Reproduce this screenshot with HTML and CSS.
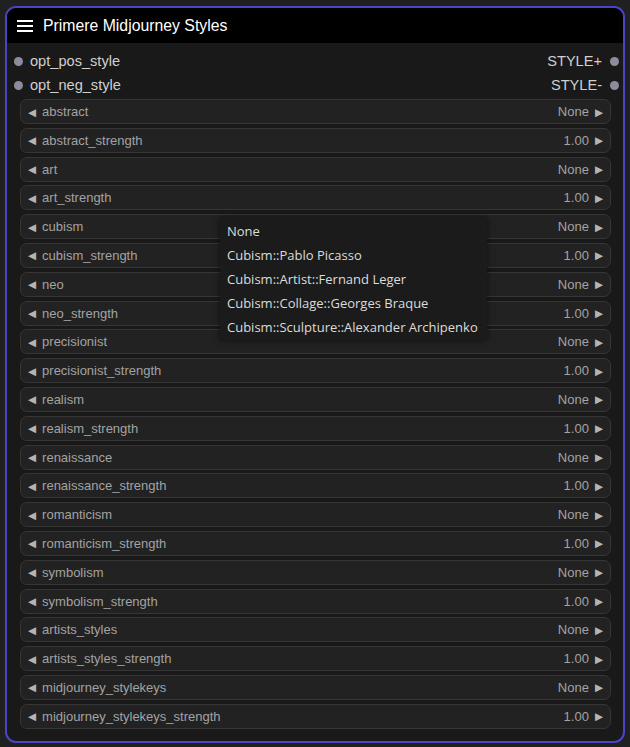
FILE: index.html
```html
<!DOCTYPE html>
<html>
<head>
<meta charset="utf-8">
<link rel="stylesheet" href="styles.css">
</head>
<body>
<div class="node">
  <div class="title">
    <svg class="ham" width="16" height="14" viewBox="0 0 16 14"><rect x="0" y="1" width="16" height="2" fill="#fff"/><rect x="0" y="6" width="16" height="2" fill="#fff"/><rect x="0" y="11" width="16" height="2" fill="#fff"/></svg>
    <span>Primere Midjourney Styles</span>
  </div>
  <div class="slots">
    <div class="slot"><span class="dot"></span><span class="in">opt_pos_style</span><span class="out">STYLE+</span><span class="dot"></span></div>
    <div class="slot"><span class="dot"></span><span class="in">opt_neg_style</span><span class="out">STYLE-</span><span class="dot"></span></div>
  </div>
  <div class="widgets">
    <div class="w"><span class="al">◀</span><span class="name">abstract</span><span class="val">None</span><span class="ar">▶</span></div>
    <div class="w"><span class="al">◀</span><span class="name">abstract_strength</span><span class="val">1.00</span><span class="ar">▶</span></div>
    <div class="w"><span class="al">◀</span><span class="name">art</span><span class="val">None</span><span class="ar">▶</span></div>
    <div class="w"><span class="al">◀</span><span class="name">art_strength</span><span class="val">1.00</span><span class="ar">▶</span></div>
    <div class="w"><span class="al">◀</span><span class="name">cubism</span><span class="val">None</span><span class="ar">▶</span></div>
    <div class="w"><span class="al">◀</span><span class="name">cubism_strength</span><span class="val">1.00</span><span class="ar">▶</span></div>
    <div class="w"><span class="al">◀</span><span class="name">neo</span><span class="val">None</span><span class="ar">▶</span></div>
    <div class="w"><span class="al">◀</span><span class="name">neo_strength</span><span class="val">1.00</span><span class="ar">▶</span></div>
    <div class="w"><span class="al">◀</span><span class="name">precisionist</span><span class="val">None</span><span class="ar">▶</span></div>
    <div class="w"><span class="al">◀</span><span class="name">precisionist_strength</span><span class="val">1.00</span><span class="ar">▶</span></div>
    <div class="w"><span class="al">◀</span><span class="name">realism</span><span class="val">None</span><span class="ar">▶</span></div>
    <div class="w"><span class="al">◀</span><span class="name">realism_strength</span><span class="val">1.00</span><span class="ar">▶</span></div>
    <div class="w"><span class="al">◀</span><span class="name">renaissance</span><span class="val">None</span><span class="ar">▶</span></div>
    <div class="w"><span class="al">◀</span><span class="name">renaissance_strength</span><span class="val">1.00</span><span class="ar">▶</span></div>
    <div class="w"><span class="al">◀</span><span class="name">romanticism</span><span class="val">None</span><span class="ar">▶</span></div>
    <div class="w"><span class="al">◀</span><span class="name">romanticism_strength</span><span class="val">1.00</span><span class="ar">▶</span></div>
    <div class="w"><span class="al">◀</span><span class="name">symbolism</span><span class="val">None</span><span class="ar">▶</span></div>
    <div class="w"><span class="al">◀</span><span class="name">symbolism_strength</span><span class="val">1.00</span><span class="ar">▶</span></div>
    <div class="w"><span class="al">◀</span><span class="name">artists_styles</span><span class="val">None</span><span class="ar">▶</span></div>
    <div class="w"><span class="al">◀</span><span class="name">artists_styles_strength</span><span class="val">1.00</span><span class="ar">▶</span></div>
    <div class="w"><span class="al">◀</span><span class="name">midjourney_stylekeys</span><span class="val">None</span><span class="ar">▶</span></div>
    <div class="w"><span class="al">◀</span><span class="name">midjourney_stylekeys_strength</span><span class="val">1.00</span><span class="ar">▶</span></div>
  </div>
</div>
<div class="menu">
  <div class="item">None</div>
  <div class="item">Cubism::Pablo Picasso</div>
  <div class="item">Cubism::Artist::Fernand Leger</div>
  <div class="item">Cubism::Collage::Georges Braque</div>
  <div class="item">Cubism::Sculpture::Alexander Archipenko</div>
</div>
</body>
</html>
```
FILE: styles.css
```css
html, body {
  margin: 0;
  padding: 0;
  background: #202020;
  width: 630px;
  height: 747px;
  overflow: hidden;
  font-family: "Liberation Sans", Arial, sans-serif;
}
body {
  padding: 6px 0 0 5px;
  box-sizing: border-box;
}
.node {
  width: 620px;
  height: 737px;
  box-sizing: border-box;
  border: 2px solid #4b44c8;
  border-radius: 11px;
  background: #191919;
  overflow: hidden;
}
.title {
  height: 35px;
  background: #000;
  display: flex;
  align-items: center;
  padding-left: 10px;
  gap: 10px;
  color: #fff;
  font-size: 15.8px;
}
.ham { margin-top: 1px; }
.slots {
  padding-top: 6px;
}
.slot {
  height: 24px;
  display: flex;
  align-items: center;
  padding: 0 4px 0 7px;
  font-size: 14.6px;
  color: #d0d0d0;
}
.dot {
  width: 9px;
  height: 9px;
  border-radius: 50%;
  background: #8e8b9c;
}
.in { margin-left: 7px; flex: 1; }
.out { margin-right: 8px; }
.widgets {
  display: flex;
  flex-direction: column;
  gap: 3.8px;
  padding: 2px 12px 0 13px;
}
.w {
  height: 25px;
  box-sizing: border-box;
  border: 1px solid #363636;
  border-radius: 7px;
  background: #222222;
  display: flex;
  align-items: center;
  padding: 0 7px 0 7px;
  font-size: 13px;
  color: #a3a3a3;
}
.al, .ar {
  font-family: "DejaVu Sans", sans-serif;
  font-size: 10.5px;
  color: #b4b4b4;
}
.name { margin-left: 6px; flex: 1; }
.val { margin-right: 6px; }
.menu {
  position: absolute;
  left: 220px;
  top: 218px;
  width: 267px;
  height: 122px;
  box-sizing: border-box;
  background: #1b1b1b;
  box-shadow: 0 0 6px rgba(0,0,0,0.6);
  padding: 1px 0 0 7px;
  font-family: "Open Sans", "Noto Sans", sans-serif;
  font-size: 13px;
  color: #dcdcdc;
}
.item {
  height: 24px;
  line-height: 24px;
}
```
